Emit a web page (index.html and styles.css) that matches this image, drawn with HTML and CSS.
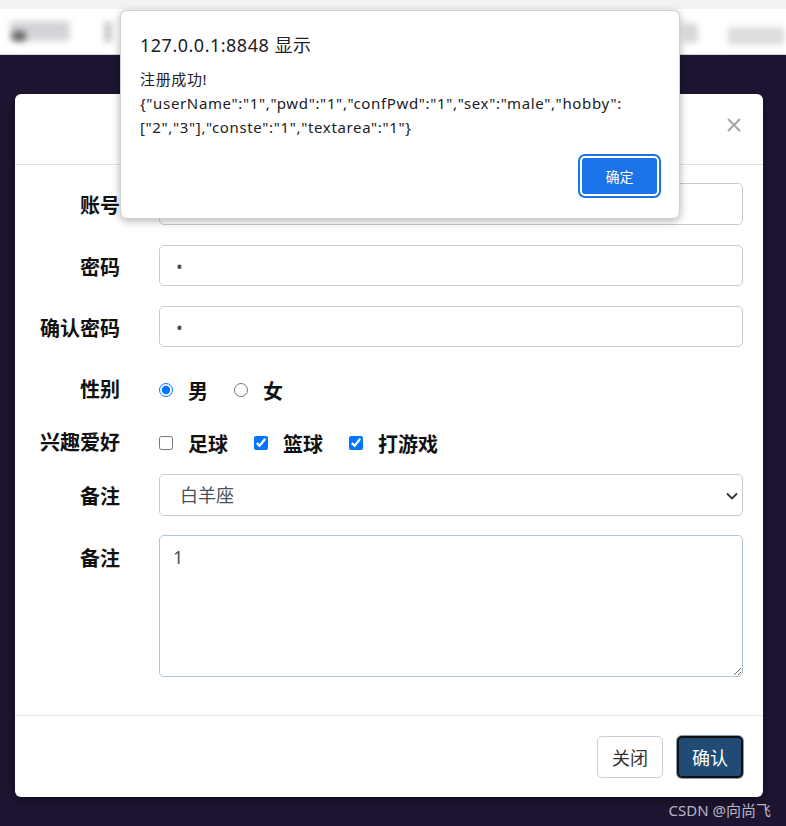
FILE: index.html
```html
<!DOCTYPE html>
<html lang="zh-CN">
<head>
    <meta charset="UTF-8">
    <meta name="viewport" content="width=device-width, initial-scale=1.0">
    <title>注册</title>
    <link rel="stylesheet" href="styles.css">
</head>
<body>
<header class="chrome">
    <div class="tabstrip"></div>
    <div class="toolbar">
        <span class="blob blob-a"></span>
        <span class="blob blob-b"></span>
        <span class="blob blob-c"></span>
        <span class="blob blob-d"></span>
        <span class="blob blob-e"></span>
    </div>
</header>

<main class="backdrop">
    <div class="modal">
        <div class="modal-header">
            <svg class="close" width="14" height="14" viewBox="0 0 14 14">
                <path d="M1 1 L13 13 M13 1 L1 13" stroke="#a6a6a6" stroke-width="2" fill="none"/>
            </svg>
        </div>
        <form class="modal-body">
            <div class="row row-first">
                <label for="userName">账号</label>
                <input type="text" id="userName" class="field" value="1">
            </div>
            <div class="row">
                <label for="pwd">密码</label>
                <input type="password" id="pwd" class="field" value="1">
            </div>
            <div class="row">
                <label for="confPwd">确认密码</label>
                <input type="password" id="confPwd" class="field" value="1">
            </div>
            <div class="row row-radio">
                <label>性别</label>
                <div class="choices">
                    <input type="radio" name="sex" id="male" checked><label for="male">男</label>
                    <input type="radio" name="sex" id="female"><label for="female">女</label>
                </div>
            </div>
            <div class="row row-check">
                <label>兴趣爱好</label>
                <div class="choices">
                    <input type="checkbox" id="h1"><label for="h1">足球</label>
                    <input type="checkbox" id="h2" checked><label for="h2">篮球</label>
                    <input type="checkbox" id="h3" checked><label for="h3">打游戏</label>
                </div>
            </div>
            <div class="row row-select">
                <label for="conste">备注</label>
                <div class="select-wrap">
                    <select id="conste" class="field">
                        <option>白羊座</option>
                        <option>金牛座</option>
                    </select>
                    <svg class="chevron" width="12" height="8" viewBox="0 0 12 8">
                        <path d="M1 1.5 L6 6.5 L11 1.5" stroke="#333" stroke-width="1.8" fill="none"/>
                    </svg>
                </div>
            </div>
            <div class="row row-area">
                <label for="textarea">备注</label>
                <textarea id="textarea" class="field">1</textarea>
            </div>
        </form>
        <div class="modal-footer">
            <button class="btn btn-close">关闭</button>
            <button class="btn btn-ok">确认</button>
        </div>
    </div>
    <div class="watermark">CSDN @向尚飞</div>
</main>

<!-- Browser alert -->
<div class="alert">
    <div class="alert-title">127.0.0.1:8848 显示</div>
    <div class="alert-msg">注册成功!<br>{"userName":"1","pwd":"1","confPwd":"1","sex":"male","hobby":<br>["2","3"],"conste":"1","textarea":"1"}</div>
    <div class="alert-actions">
        <button class="alert-btn">确定</button>
    </div>
</div>
</body>
</html>
```

FILE: styles.css
```css
body {
    margin: 0;
    padding: 0;
    font-family: "Noto Sans", "Noto Sans CJK SC", sans-serif;
    background-color: #1e1532;
    height: 826px;
    overflow: hidden;
}
.chrome {
    background-color: #ffffff;
}
.tabstrip {
    height: 9px;
    background-color: #f1f3f4;
}
.toolbar {
    height: 45px;
    border-bottom: 1px solid #d4d4d8;
    position: relative;
    overflow: hidden;
}
.blob {
    position: absolute;
    background-color: #c8c8cc;
    filter: blur(3px);
    border-radius: 4px;
}
.blob-a { left: 10px; top: 12px; width: 60px; height: 20px; background-color: #d4d4d8; }
.blob-b { left: 12px; top: 22px; width: 14px; height: 10px; background-color: #666; }
.blob-c { left: 104px; top: 12px; width: 8px; height: 22px; }
.blob-d { left: 682px; top: 14px; width: 16px; height: 20px; background-color: #d8d8d8; }
.blob-e { left: 728px; top: 18px; width: 56px; height: 18px; background-color: #dcdcdc; }

.backdrop {
    padding: 39px 23px 0 15px;
}
.modal {
    background-color: #ffffff;
    border-radius: 6px;
    box-shadow: 0 4px 12px rgba(0, 0, 0, 0.4);
}
.modal-header {
    height: 70px;
    border-bottom: 1px solid #dee2e6;
    display: flex;
    align-items: center;
    justify-content: flex-end;
    padding-right: 22px;
}
.close {
    margin-top: -8px;
}
.modal-body {
    padding: 18px 20px 38px 15px;
    display: flex;
    flex-direction: column;
}
.row {
    display: grid;
    grid-template-columns: 90px 1fr;
    column-gap: 39px;
    margin-bottom: 20px;
}
.row > label {
    text-align: right;
    font-size: 20px;
    font-weight: bold;
    line-height: 41px;
    padding-top: 2px;
    margin-bottom: -2px;
    color: #111;
}
.field {
    box-sizing: border-box;
    width: 100%;
    height: 41px;
    border: 1px solid #c8ccd0;
    border-radius: 5px;
    padding: 0 16px;
    font-family: "Noto Sans", "Noto Sans CJK SC", sans-serif;
    font-size: 18px;
    color: #495057;
    background-color: #ffffff;
    outline: none;
}
.row-first .field {
    height: 42px;
}
.row-radio {
    height: 46px;
    margin-bottom: 0;
    align-items: center;
}
.row-check {
    height: 60px;
    margin-bottom: 1px;
    align-items: center;
}
.row-radio > label,
.row-check > label {
    line-height: 28px;
    padding-top: 0;
    margin-bottom: 0;
}
.choices {
    display: flex;
    align-items: center;
}
.choices input {
    width: 14px;
    height: 14px;
    margin: 0 15px 0 0;
}
.choices label {
    font-size: 20px;
    font-weight: bold;
    color: #111;
    margin-right: 26px;
}
.row-select {
    margin-bottom: 19px;
}
.row-select .field {
    height: 42px;
}
.select-wrap {
    position: relative;
}
select.field {
    appearance: none;
    -webkit-appearance: none;
    padding-left: 20px;
}
.chevron {
    position: absolute;
    right: 5px;
    top: 18px;
    pointer-events: none;
}
.row-area {
    margin-bottom: 0;
}
.row-area > label {
    line-height: 44px;
}
textarea.field {
    height: 142px;
    padding: 8px 13px;
    resize: vertical;
    border-color: #b3c3d6;
    line-height: 26px;
}
.modal-footer {
    border-top: 1px solid #e5e5e5;
    height: 81px;
    display: flex;
    align-items: center;
    justify-content: flex-end;
    gap: 14px;
    padding-right: 20px;
}
.btn {
    height: 42px;
    width: 66px;
    border-radius: 5px;
    font-family: "Noto Sans", "Noto Sans CJK SC", sans-serif;
    font-size: 18px;
    cursor: pointer;
}
.btn-close {
    background-color: #ffffff;
    border: 1px solid #cfcfcf;
    color: #333;
}
.btn-ok {
    background-color: #1f4b74;
    color: #ffffff;
    border: 2px solid #111;
    box-shadow: 0 0 0 1px #8a9bb0;
}
.watermark {
    text-align: right;
    color: #b8b6c0;
    font-size: 15px;
    margin-right: -8px;
    margin-top: 2px;
}

.alert {
    position: absolute;
    left: 120px;
    top: 10px;
    width: 560px;
    height: 209px;
    box-sizing: border-box;
    background-color: #ffffff;
    border: 1px solid #d0d0d0;
    border-radius: 7px;
    box-shadow: 0 2px 8px rgba(0, 0, 0, 0.3);
    padding: 21px 20px 0 19px;
    color: #202124;
}
.alert-title {
    font-size: 18px;
    letter-spacing: 0.5px;
    line-height: 26px;
}
.alert-msg {
    margin-top: 9px;
    font-size: 15px;
    letter-spacing: 0.65px;
    line-height: 24px;
}
.alert-actions {
    display: flex;
    justify-content: flex-end;
    margin-top: 17px;
}
.alert-btn {
    width: 79px;
    height: 40px;
    background-color: #1a73e8;
    color: #ffffff;
    border: 2px solid #ffffff;
    border-radius: 5px;
    box-shadow: 0 0 0 2px #1a73e8;
    font-family: "Noto Sans", "Noto Sans CJK SC", sans-serif;
    font-size: 14px;
}
```
